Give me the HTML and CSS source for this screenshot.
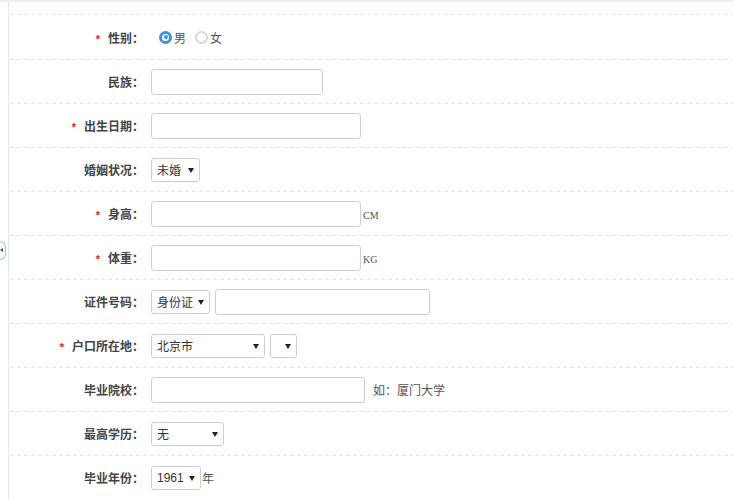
FILE: index.html
```html
<!DOCTYPE html>
<html lang="zh-CN">
<head>
<meta charset="utf-8">
<title>个人信息</title>
<link rel="stylesheet" href="styles.css">
</head>
<body>
<div class="topbar"></div>
<div class="main">
  <div class="side"><span class="toggle"></span></div>
  <div class="content">
    <div class="form">
      <div class="row row-first">
        <div class="label"><span class="req">*</span>性别：</div>
        <div class="field">
          <label class="radio"><span class="dot on"></span>男</label>
          <label class="radio"><span class="dot"></span>女</label>
        </div>
      </div>
      <div class="row">
        <div class="label">民族：</div>
        <div class="field"><input class="text w172" type="text"></div>
      </div>
      <div class="row">
        <div class="label"><span class="req">*</span>出生日期：</div>
        <div class="field"><input class="text w210" type="text"></div>
      </div>
      <div class="row">
        <div class="label">婚姻状况：</div>
        <div class="field"><span class="sel w49"><select><option>未婚</option></select></span></div>
      </div>
      <div class="row">
        <div class="label"><span class="req">*</span>身高：</div>
        <div class="field"><input class="text w210" type="text"><span class="unit">CM</span></div>
      </div>
      <div class="row">
        <div class="label"><span class="req">*</span>体重：</div>
        <div class="field"><input class="text w210" type="text"><span class="unit">KG</span></div>
      </div>
      <div class="row">
        <div class="label">证件号码：</div>
        <div class="field gap5"><span class="sel w59"><select><option>身份证</option></select></span><input class="text w215" type="text"></div>
      </div>
      <div class="row">
        <div class="label"><span class="req">*</span>户口所在地：</div>
        <div class="field gap5"><span class="sel w114"><select><option>北京市</option></select></span><span class="sel w27"><select><option></option></select></span></div>
      </div>
      <div class="row">
        <div class="label">毕业院校：</div>
        <div class="field"><input class="text w214" type="text"><span class="hint">如：厦门大学</span></div>
      </div>
      <div class="row">
        <div class="label">最高学历：</div>
        <div class="field"><span class="sel w73"><select><option>无</option></select></span></div>
      </div>
      <div class="row row-last">
        <div class="label">毕业年份：</div>
        <div class="field"><span class="sel w50"><select><option>1961</option></select></span><span class="after">年</span></div>
      </div>
    </div>
  </div>
</div>
</body>
</html>
```
FILE: styles.css
```css
html, body {
  margin: 0;
  padding: 0;
  background: #fff;
}
body {
  font-family: "Noto Sans CJK SC", "Liberation Sans", sans-serif;
  font-size: 12px;
  color: #444;
  width: 733px;
  height: 499px;
  overflow: hidden;
}
.topbar {
  height: 2px;
  background: #efefef;
}
.main {
  display: flex;
  height: 497px;
}
.side {
  width: 8px;
  position: relative;
}
.toggle {
  position: absolute;
  left: 0;
  top: 239px;
  width: 5px;
  height: 17px;
  border: 1px solid #a7c2e2;
  border-left: none;
  border-radius: 0 6px 6px 0;
  background: #f7f9fc;
}
.toggle::after {
  content: "";
  position: absolute;
  left: 0;
  top: 6px;
  border-top: 2px solid transparent;
  border-bottom: 2px solid transparent;
  border-right: 3px solid #555;
}
.content {
  flex: 1;
  border-left: 1px solid #e6e6e6;
  padding-top: 12px;
}
.form {
  background: repeating-linear-gradient(to right, #e3e3e3 0 4px, transparent 4px 7px) 1px 0 / 100% 1px no-repeat;
  padding-top: 1px;
}
.row {
  display: flex;
  align-items: center;
  height: 43px;
  padding-bottom: 1px;
  background: repeating-linear-gradient(to right, #e3e3e3 0 4px, transparent 4px 7px) 1px 100% / 100% 1px no-repeat;
}
.row-first {
  height: 44px;
}
.row-last {
  background: none;
}
.label {
  width: 135px;
  text-align: right;
  font-weight: bold;
  color: #444;
  font-size: 12px;
  flex: none;
  margin-right: 7px;
}
.req {
  color: #e2231a;
  font-family: "Liberation Sans", sans-serif;
  font-weight: bold;
  font-size: 11px;
  margin-right: 8px;
}
.field {
  display: flex;
  align-items: center;
}
.gap5 {
  gap: 5px;
}
.radio {
  display: flex;
  align-items: center;
  color: #555;
  margin-left: 8px;
  margin-right: 9px;
}
.radio + .radio {
  margin-left: 0;
}
.dot {
  box-sizing: border-box;
  width: 13px;
  height: 13px;
  border-radius: 50%;
  border: 2px solid #d4d6d9;
  background: #fff;
  margin-right: 2px;
  position: relative;
}
.dot.on {
  border: 3px solid #3d93d8;
}
.dot.on::after {
  content: "";
  position: absolute;
  left: 1.5px;
  top: 1.5px;
  width: 4px;
  height: 4px;
  border-radius: 50%;
  background: #3d93d8;
}
.text {
  box-sizing: border-box;
  height: 26px;
  border: 1px solid #cfcfcf;
  border-radius: 3px;
  background: #fff;
  padding: 0 5px;
  margin: 0;
  font: inherit;
  outline: none;
}
.w172 { width: 172px; }
.w210 { width: 210px; }
.w214 { width: 214px; }
.w215 { width: 215px; }
.sel {
  position: relative;
  display: inline-block;
  height: 24px;
}
.sel select {
  -webkit-appearance: none;
  appearance: none;
  box-sizing: border-box;
  width: 100%;
  height: 24px;
  border: 1px solid #cfcfcf;
  border-radius: 3px;
  background: #fff;
  padding: 0 0 0 5px;
  margin: 0;
  font-family: "Noto Sans CJK SC", "Liberation Sans", sans-serif;
  font-size: 12px;
  color: #333;
  outline: none;
}
.sel::after {
  content: "";
  position: absolute;
  right: 6px;
  top: 10px;
  border-left: 3px solid transparent;
  border-right: 3px solid transparent;
  border-top: 5px solid #222;
  pointer-events: none;
}
.w49 { width: 49px; }
.w50 { width: 50px; }
.w59 { width: 59px; }
.w73 { width: 73px; }
.w114 { width: 114px; }
.w27 { width: 27px; }
.w50 select {
  font-family: "Liberation Sans", sans-serif;
}
.unit {
  font-family: "Liberation Serif", serif;
  font-size: 10px;
  color: #555;
  margin-left: 2px;
  margin-top: 3px;
}
.hint {
  color: #555;
  margin-left: 8px;
}
.after {
  color: #555;
  margin-left: 1px;
}
```
